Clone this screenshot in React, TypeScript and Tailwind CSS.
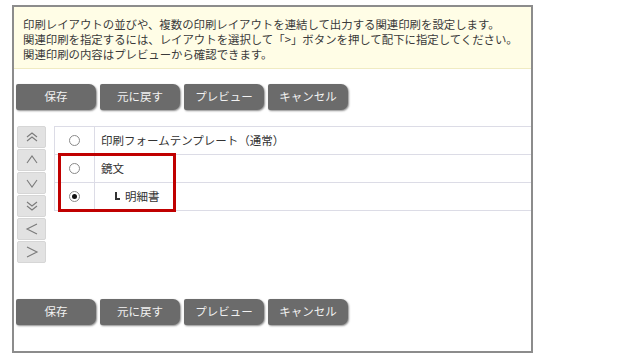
import React, { useState } from "react";

const ACTIONS = ["保存", "元に戻す", "プレビュー", "キャンセル"];

const ActionBar: React.FC = () => (
  <div className="flex gap-[4px] pl-[2px]">
    {ACTIONS.map((label) => (
      <button
        key={label}
        className="w-[80px] h-[26px] bg-[#6b6b6b] text-[#f2f2f2] text-[11.5px] rounded-[2px_7px_7px_2px] shadow-[1px_1px_2px_rgba(0,0,0,0.45)]"
      >
        {label}
      </button>
    ))}
  </div>
);

const Chevron: React.FC<{ d: string }> = ({ d }) => (
  <svg width="16" height="14" viewBox="0 0 16 14" fill="none" stroke="#7a7a7a" strokeWidth={1.1}>
    <path d={d} />
  </svg>
);

const ARROWS = [
  "M3 7 L8 3 L13 7 M3 11 L8 7 L13 11",
  "M3 10 L8 3 L13 10",
  "M3 4 L8 11 L13 4",
  "M3 3 L8 7 L13 3 M3 7 L8 11 L13 7",
  "M13 2 L3 7 L13 12",
  "M3 2 L13 7 L3 12",
];

type Row = { id: number; label: string; child?: boolean };

const ROWS: Row[] = [
  { id: 1, label: "印刷フォームテンプレート（通常）" },
  { id: 2, label: "鏡文" },
  { id: 3, label: "明細書", child: true },
];

const Radio: React.FC<{ checked: boolean; onClick: () => void }> = ({ checked, onClick }) => (
  <span
    onClick={onClick}
    className="w-[11px] h-[11px] rounded-full border border-[#8a8a8a] bg-white flex items-center justify-center"
  >
    {checked && <span className="w-[5px] h-[5px] rounded-full bg-[#111]" />}
  </span>
);

export default function App() {
  const [selected, setSelected] = useState(3);

  return (
    <div
      className="w-[640px] h-[363px] bg-white pt-[5px] pl-[12px] text-[#333]"
      style={{ fontFamily: '"Noto Sans CJK JP", "Noto Sans", sans-serif' }}
    >
      <div className="w-[521px] h-[348px] border-2 border-[#8c8c8c] flex flex-col">
        {/* Notice */}
        <div className="bg-[#fffde6] border-b border-[#f0ebc2] px-[9px] pt-[10px] pb-[6px] text-[11.4px] leading-[15px] text-[#3a3a3a] whitespace-nowrap">
          <p>印刷レイアウトの並びや、複数の印刷レイアウトを連結して出力する関連印刷を設定します。</p>
          <p>関連印刷を指定するには、レイアウトを選択して「&gt;」ボタンを押して配下に指定してください。</p>
          <p>関連印刷の内容はプレビューから確認できます。</p>
        </div>

        <div className="mt-[15px]">
          <ActionBar />
        </div>

        {/* Layout list */}
        <div className="mt-[16px] flex">
          <div className="ml-[3px] flex flex-col gap-[1px]">
            {ARROWS.map((d, i) => (
              <button
                key={i}
                className="w-[29px] h-[22px] bg-[#e2e2e2] border border-[#d6d6d6] rounded-[2px] flex items-center justify-center"
              >
                <Chevron d={d} />
              </button>
            ))}
          </div>

          <div className="relative ml-[8px] flex-1">
            <div className="border-l border-t border-[#dcdce6]">
              {ROWS.map((row) => (
                <div key={row.id} className="flex h-[28px] border-b border-[#dcdce6]">
                  <div className="w-[40px] border-r border-[#dcdce6] flex items-center justify-center">
                    <Radio checked={selected === row.id} onClick={() => setSelected(row.id)} />
                  </div>
                  <div
                    className={`flex items-center text-[11.5px] text-[#333] ${row.child ? "pl-[20px]" : "pl-[6px]"}`}
                  >
                    {row.child && (
                      <span className="w-[5px] h-[8px] border-l-2 border-b-2 border-[#333] mr-[5px] mb-[2px]" />
                    )}
                    {row.label}
                  </div>
                </div>
              ))}
            </div>
            {/* highlight */}
            <div className="absolute left-[4px] top-[27px] w-[118px] h-[59px] border-[3px] border-[#c00000]" />
          </div>
        </div>

        <div className="mt-auto mb-[26px]">
          <ActionBar />
        </div>
      </div>
    </div>
  );
}
